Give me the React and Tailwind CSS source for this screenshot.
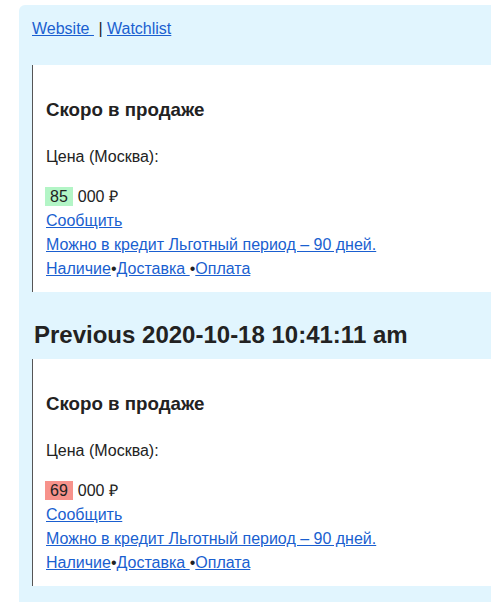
const links = ["Наличие", "Доставка ", "Оплата"];

function Offer({ price, tone }) {
  return (
    <div className="border-l border-[#555] bg-white pl-[13px] pt-[34px] pb-[11px]">
      <h3 className="text-[18.72px] leading-[22px] font-bold text-[#222]">Скоро в продаже</h3>
      <div className="mt-[27px] leading-[18px]">Цена (Москва):</div>
      <div className="mt-[21px] flex items-center leading-[19px]">
        <span className={`-ml-[1px] px-[5px] ${tone}`}>{price}</span>
        <span className="ml-[5px]">000 ₽</span>
      </div>
      <div className="mt-[3px] flex flex-col text-[#1a5fd0] leading-[24px]">
        <a href="#" className="underline">Сообщить</a>
        <a href="#" className="underline">Можно в кредит Льготный период – 90 дней.</a>
        <div className="text-[#222]">
          <a href="#" className="underline text-[#1a5fd0]">{links[0]}</a>•
          <a href="#" className="underline text-[#1a5fd0] whitespace-pre">{links[1]}</a>•
          <a href="#" className="underline text-[#1a5fd0]">{links[2]}</a>
        </div>
      </div>
    </div>
  );
}

export default function App() {
  return (
    <div className="min-h-[602px] bg-white pl-[19px] pt-[5px] font-['Liberation_Sans',Arial,sans-serif] text-[16px] text-[#222]">
      <div className="min-h-[597px] rounded-tl-[6px] bg-[#e1f5fe] pl-[13px] pt-[15px] pb-[16px]">
        <div className="leading-[18px]">
          <a href="#" className="underline text-[#1a5fd0] whitespace-pre">Website </a>
          <span> | </span>
          <a href="#" className="underline text-[#1a5fd0]">Watchlist</a>
        </div>
        <div className="mt-[27px]">
          <Offer price="85" tone="bg-[#b3f5c6]" />
        </div>
        <h2 className="mt-[29px] mb-[10px] pl-[2px] text-[24px] leading-[28px] font-bold text-[#222]">
          Previous 2020-10-18 10:41:11 am
        </h2>
        <Offer price="69" tone="bg-[#f7928b]" />
      </div>
    </div>
  );
}
